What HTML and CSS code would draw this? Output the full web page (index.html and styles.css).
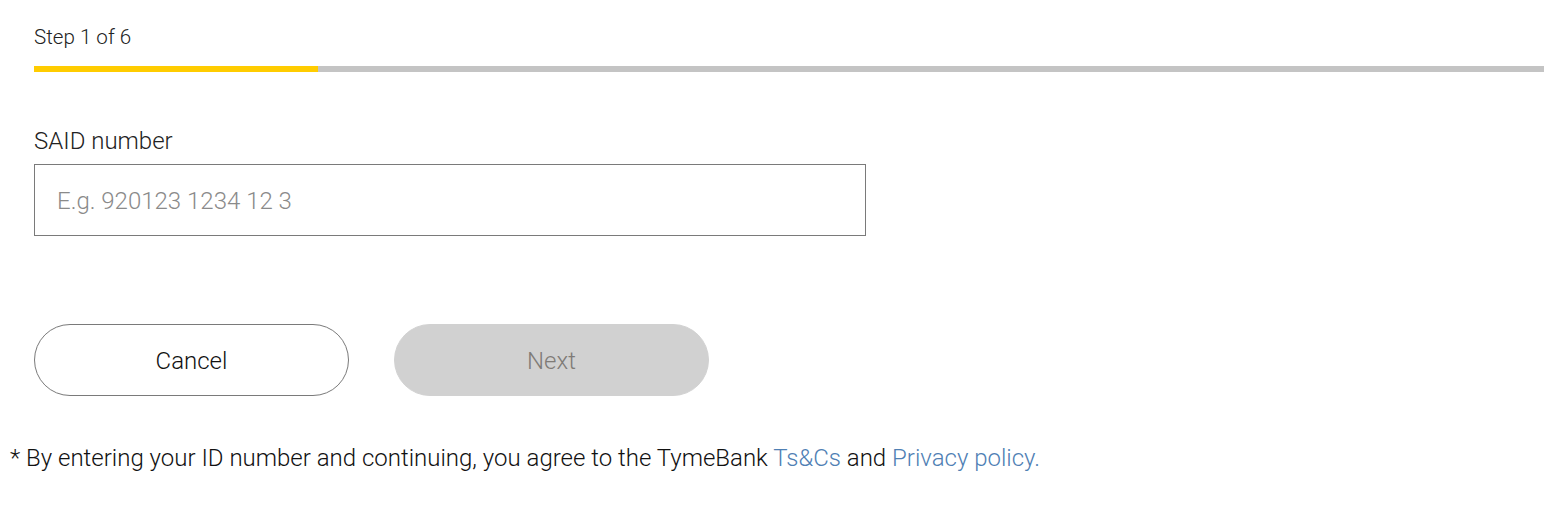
FILE: index.html
```html
<!DOCTYPE html>
<html lang="en">
<head>
<meta charset="utf-8">
<title>Step 1 of 6</title>
<link rel="stylesheet" href="styles.css">
</head>
<body>
  <main class="page">
    <section class="form-area">
      <div class="step-label">Step 1 of 6</div>
      <div class="progress"><div class="progress-fill"></div></div>
      <label class="field-label" for="said">SAID number</label>
      <input class="field-input" id="said" type="text" placeholder="E.g. 920123 1234 12 3">
      <div class="actions">
        <button class="btn btn-outline" type="button">Cancel</button>
        <button class="btn btn-disabled" type="button" disabled>Next</button>
      </div>
    </section>
    <p class="terms">* By entering your ID number and continuing, you agree to the TymeBank <a href="#" class="link">Ts&amp;Cs</a> and <a href="#" class="link">Privacy policy.</a></p>
  </main>
</body>
</html>
```

FILE: styles.css
```css
* { box-sizing: border-box; }

html, body {
  margin: 0;
  padding: 0;
  background: #ffffff;
}

body {
  font-family: Roboto, "Liberation Sans", sans-serif;
  font-weight: 300;
  color: #1a1a1a;
  overflow: hidden;
}

.page {
  display: flex;
  flex-direction: column;
  padding: 25px 0 0 10px;
}

.form-area {
  display: flex;
  flex-direction: column;
  padding-left: 24px;
}

.step-label {
  font-size: 20.6px;
  line-height: 24px;
  color: #222;
}

.progress {
  margin-top: 17px;
  height: 6px;
  background: #c4c4c4;
  width: calc(100% + 10px);
}

.progress-fill {
  width: 284px;
  height: 100%;
  background: #ffcc00;
}

.field-label {
  margin-top: 55px;
  font-size: 24px;
  line-height: 28px;
  color: #222;
}

.field-input {
  margin-top: 9px;
  width: 832px;
  height: 72px;
  border: 1px solid #7a7a7a;
  border-radius: 0;
  padding: 2px 0 0 22px;
  font-family: Roboto, "Liberation Sans", sans-serif;
  font-weight: 300;
  font-size: 24px;
  color: #222;
  outline: none;
}

.field-input::placeholder {
  color: #8a8a8a;
}

.actions {
  display: flex;
  gap: 45px;
  margin-top: 88px;
}

.btn {
  width: 315px;
  height: 72px;
  border-radius: 36px;
  font-family: Roboto, "Liberation Sans", sans-serif;
  font-weight: 300;
  font-size: 24px;
  padding: 2px 0 0 0;
}

.btn-outline {
  background: #ffffff;
  border: 1px solid #7a7a7a;
  color: #111;
}

.btn-disabled {
  background: #d1d1d1;
  border: 1px solid #d1d1d1;
  color: #7f7b77;
}

.terms {
  margin: 48px 0 0 0;
  font-size: 24px;
  line-height: 28px;
  color: #111;
}

.link {
  color: #4f80b4;
  text-decoration: none;
}
```
